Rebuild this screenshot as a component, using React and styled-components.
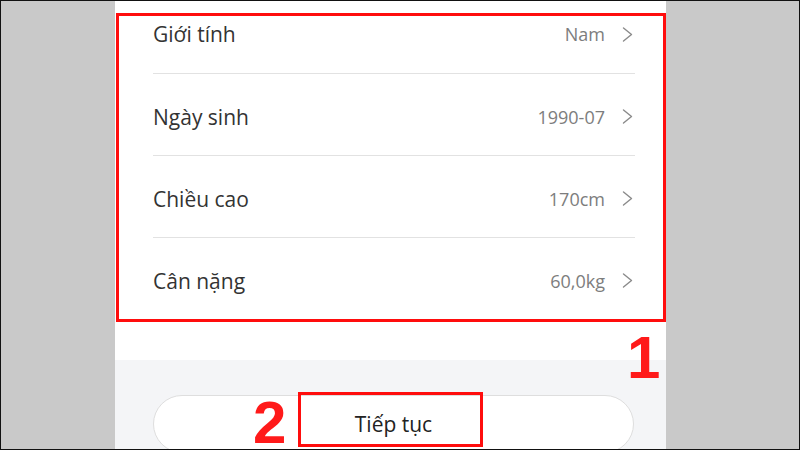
import React from "react";
import styled, { createGlobalStyle } from "styled-components";

const Global = createGlobalStyle`
  html, body { margin: 0; padding: 0; background: #c9c9c9; overflow: hidden; }
  * { box-sizing: border-box; }
`;

const Frame = styled.div`
  position: relative;
  width: 800px;
  height: 450px;
  display: flex;
  background: #c9c9c9;
  border: 1px solid #111;
  overflow: hidden;
  font-family: "Open Sans", "Noto Sans", sans-serif;
`;

const Side = styled.div`
  width: ${(p) => p.$w}px;
  flex: none;
  background: #c9c9c9;
`;

const Screen = styled.div`
  width: 551px;
  flex: none;
  background: #fff;
  display: flex;
  flex-direction: column;
`;

const List = styled.div`
  margin-top: -10px;
  padding: 0 31px 0 38px;
  display: flex;
  flex-direction: column;
`;

const Row = styled.div`
  height: 82px;
  padding-top: 4px;
  display: flex;
  align-items: center;
  border-bottom: 1px solid ${(p) => (p.$last ? "transparent" : "#e2e2e2")};
  &:first-child { height: 83px; }
`;

const Label = styled.span`
  flex: 1;
  font-size: 21px;
  color: #333;
`;

const Value = styled.span`
  font-size: 18px;
  color: #7d7d7d;
`;

const Chevron = styled.svg`
  width: 11px;
  height: 15px;
  margin-left: 17px;
  margin-right: 2px;
  flex: none;
`;

const Spacer = styled.div`
  height: 40px;
  flex: none;
`;

const Footer = styled.div`
  flex: 1;
  background: #f4f5f7;
  padding: 35px 32px 0 38px;
`;

const Button = styled.div`
  height: 58px;
  border: 1px solid #dedede;
  border-radius: 29px;
  background: #fff;
  display: flex;
  align-items: center;
  justify-content: center;
  font-size: 21px;
  color: #222;
`;

const Box = styled.div`
  position: absolute;
  border: 3px solid #ff0d0d;
`;

const Num = styled.div`
  position: absolute;
  font-family: "Liberation Sans", Arial, sans-serif;
  font-weight: 700;
  font-size: 60px;
  line-height: 0.8;
  color: #ff1a1a;
`;

const rows = [
  ["Giới tính", "Nam"],
  ["Ngày sinh", "1990-07"],
  ["Chiều cao", "170cm"],
  ["Cân nặng", "60,0kg"],
];

export default function App() {
  return (
    <>
      <Global />
      <Frame>
        <Side $w={114} />
        <Screen>
          <List>
            {rows.map(([l, v], i) => (
              <Row key={l} $last={i === rows.length - 1}>
                <Label>{l}</Label>
                <Value>{v}</Value>
                <Chevron viewBox="0 0 11 15">
                  <path d="M1.5 1 L9.5 7.5 L1.5 14" fill="none" stroke="#8a8a8a" strokeWidth="1.4" strokeLinecap="round" strokeLinejoin="round" />
                </Chevron>
              </Row>
            ))}
          </List>
          <Spacer />
          <Footer>
            <Button>Tiếp tục</Button>
          </Footer>
        </Screen>
        <Side $w={134} />
        <Box style={{ left: 115, top: 12, width: 550, height: 309 }} />
        <Box style={{ left: 297, top: 391, width: 185, height: 55 }} />
        <Num style={{ left: 252, top: 398 }}>2</Num>
        <Num style={{ left: 626, top: 333 }}>1</Num>
      </Frame>
    </>
  );
}
